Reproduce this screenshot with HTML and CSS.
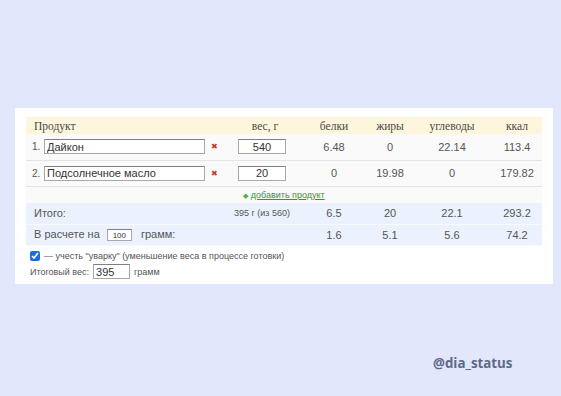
FILE: index.html
```html
<!DOCTYPE html>
<html lang="ru">
<head>
  <meta charset="UTF-8" />
  <title>Калькулятор рецепта</title>
  <link rel="stylesheet" href="styles.css">
</head>
<body>
  <div class="card">
    <table class="calc">
      <colgroup>
        <col class="c-name"><col class="c-weight"><col class="c-p"><col class="c-f"><col class="c-c"><col class="c-k">
      </colgroup>
      <thead>
        <tr>
          <th class="left">Продукт</th>
          <th>вес, г</th>
          <th>белки</th>
          <th>жиры</th>
          <th>углеводы</th>
          <th>ккал</th>
        </tr>
      </thead>
      <tbody>
        <tr class="item">
          <td class="left">
            <div class="name-cell">
              <span class="num">1.</span>
              <input class="name" type="text" value="Дайкон">
              <span class="del">✖</span>
            </div>
          </td>
          <td><input class="weight" type="text" value="540"></td>
          <td>6.48</td>
          <td>0</td>
          <td>22.14</td>
          <td>113.4</td>
        </tr>
        <tr class="item">
          <td class="left">
            <div class="name-cell">
              <span class="num">2.</span>
              <input class="name" type="text" value="Подсолнечное масло">
              <span class="del">✖</span>
            </div>
          </td>
          <td><input class="weight" type="text" value="20"></td>
          <td>0</td>
          <td>19.98</td>
          <td>0</td>
          <td>179.82</td>
        </tr>
        <tr class="add-row">
          <td colspan="6"><span class="plus">◆</span> <a href="#">добавить продукт</a></td>
        </tr>
        <tr class="total">
          <td class="left">Итого:</td>
          <td class="small">395 г (из 560)</td>
          <td>6.5</td>
          <td>20</td>
          <td>22.1</td>
          <td>293.2</td>
        </tr>
        <tr class="total">
          <td class="left">В расчете на <input class="per" type="text" value="100"> грамм:</td>
          <td></td>
          <td>1.6</td>
          <td>5.1</td>
          <td>5.6</td>
          <td>74.2</td>
        </tr>
      </tbody>
    </table>

    <div class="options">
      <label class="opt-line"><input type="checkbox" checked> — учесть "уварку" (уменьшение веса в процессе готовки)</label>
      <div class="opt-line">Итоговый вес: <input class="final" type="text" value="395"> грамм</div>
    </div>
  </div>

  <div class="brand">@dia_status</div>
</body>
</html>
```

FILE: styles.css
```css
* {
  margin: 0;
  padding: 0;
  box-sizing: border-box;
}

body {
  background: #e3e7fb;
  font-family: 'Liberation Sans', Arial, sans-serif;
  color: #444;
  width: 561px;
  height: 396px;
  padding-top: 108px;
  position: relative;
}

.card {
  margin-left: 15px;
  width: 538px;
  height: 176px;
  background: #fff;
  padding: 9px 11px 0;
}

.calc {
  width: 516px;
  border-collapse: collapse;
  table-layout: fixed;
  font-size: 11px;
}

.c-name { width: 204px; }
.c-weight { width: 70px; }
.c-p { width: 68px; }
.c-f { width: 44px; }
.c-c { width: 80px; }
.c-k { width: 50px; }

.calc th {
  background: #fdf6dd;
  font-family: 'Liberation Serif', 'Times New Roman', serif;
  font-weight: normal;
  font-size: 11.5px;
  color: #4a4a4a;
  height: 17px;
  text-align: center;
}

.calc td {
  text-align: center;
  color: #555;
}

.calc .left {
  text-align: left;
  padding-left: 8px;
}

.item td {
  height: 26px;
  background: #fafafa;
  border-bottom: 1px solid #e4e4e4;
}

.item td.left {
  padding-left: 6px;
}

.name-cell {
  display: flex;
  align-items: center;
}

.num {
  width: 12px;
  font-size: 10px;
}

input[type="text"] {
  font-family: 'Liberation Sans', Arial, sans-serif;
  border: 1px solid #a8a8a8;
  border-top-color: #808080;
  background: #fff;
  color: #333;
  outline: none;
}

.name {
  width: 161px;
  height: 15px;
  font-size: 11px;
  padding: 0 2px;
}

.del {
  color: #c9372c;
  font-size: 8px;
  margin-left: 6px;
}

.weight {
  width: 48px;
  height: 15px;
  font-size: 11px;
  text-align: center;
  margin-right: 6px;
}

.add-row td {
  height: 17px;
  font-size: 9px;
  background: #fafafa;
}

.add-row a {
  color: #2e9a2e;
}

.plus {
  color: #55b045;
  font-size: 7px;
}

.total td {
  height: 21px;
  background: #ebf2fd;
  border-bottom: 1px solid #f7f9fe;
}

.total td.small {
  font-size: 9px;
  padding-right: 6px;
}

.per {
  width: 25px;
  height: 12px;
  font-size: 8px;
  text-align: center;
  margin: 0 6px 0 4px;
}

.options {
  padding: 2px 0 0 4px;
  font-size: 9px;
  color: #555;
}

.opt-line {
  display: flex;
  align-items: center;
  gap: 4px;
  height: 16px;
}

.opt-line input[type="checkbox"] {
  width: 10px;
  height: 10px;
  accent-color: #1a6fd8;
}

.final {
  width: 37px;
  height: 15px;
  font-size: 11px;
  padding: 0 2px;
}

.brand {
  position: absolute;
  left: 433px;
  top: 354px;
  font-family: 'Open Sans', sans-serif;
  font-weight: 700;
  font-size: 13.3px;
  color: #5b6a88;
}
```
